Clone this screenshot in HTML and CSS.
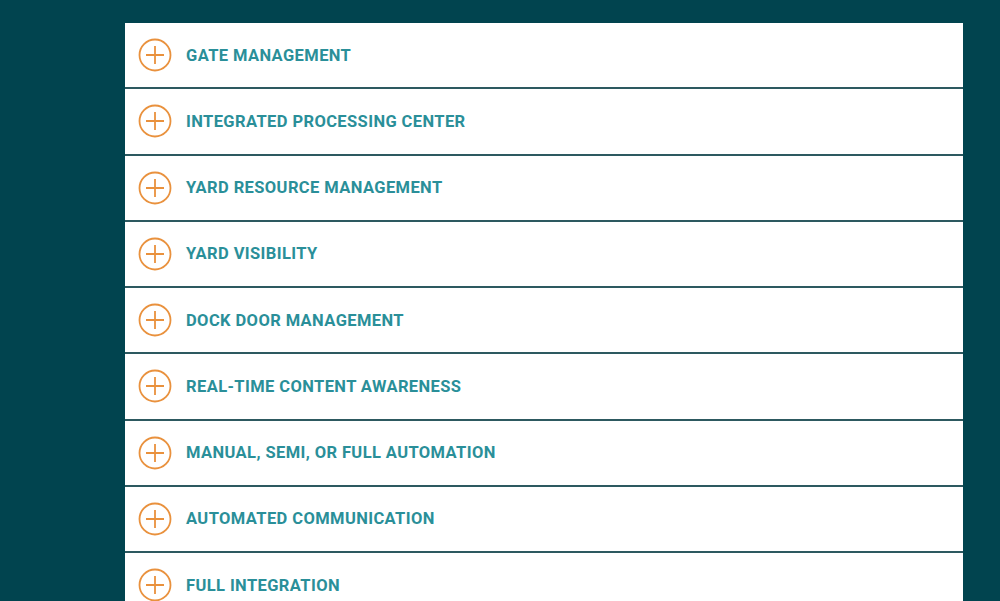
FILE: index.html
```html
<!DOCTYPE html>
<html lang="en">
<head>
	<meta charset="UTF-8">
	<meta name="viewport" content="width=device-width, initial-scale=1.0">
	<title>Features</title>
	<link rel="stylesheet" href="styles.css">
</head>
<body>
	<div class="accordion">
		<div class="acc-item"><span class="acc-icon"><svg viewBox="0 0 34 34"><circle cx="17" cy="17" r="15.5"/><path d="M8 17h18M17 8v18"/></svg></span><span class="acc-title">GATE MANAGEMENT</span></div>
		<div class="acc-item"><span class="acc-icon"><svg viewBox="0 0 34 34"><circle cx="17" cy="17" r="15.5"/><path d="M8 17h18M17 8v18"/></svg></span><span class="acc-title">INTEGRATED PROCESSING CENTER</span></div>
		<div class="acc-item"><span class="acc-icon"><svg viewBox="0 0 34 34"><circle cx="17" cy="17" r="15.5"/><path d="M8 17h18M17 8v18"/></svg></span><span class="acc-title">YARD RESOURCE MANAGEMENT</span></div>
		<div class="acc-item"><span class="acc-icon"><svg viewBox="0 0 34 34"><circle cx="17" cy="17" r="15.5"/><path d="M8 17h18M17 8v18"/></svg></span><span class="acc-title">YARD VISIBILITY</span></div>
		<div class="acc-item"><span class="acc-icon"><svg viewBox="0 0 34 34"><circle cx="17" cy="17" r="15.5"/><path d="M8 17h18M17 8v18"/></svg></span><span class="acc-title">DOCK DOOR MANAGEMENT</span></div>
		<div class="acc-item"><span class="acc-icon"><svg viewBox="0 0 34 34"><circle cx="17" cy="17" r="15.5"/><path d="M8 17h18M17 8v18"/></svg></span><span class="acc-title">REAL-TIME CONTENT AWARENESS</span></div>
		<div class="acc-item"><span class="acc-icon"><svg viewBox="0 0 34 34"><circle cx="17" cy="17" r="15.5"/><path d="M8 17h18M17 8v18"/></svg></span><span class="acc-title">MANUAL, SEMI, OR FULL AUTOMATION</span></div>
		<div class="acc-item"><span class="acc-icon"><svg viewBox="0 0 34 34"><circle cx="17" cy="17" r="15.5"/><path d="M8 17h18M17 8v18"/></svg></span><span class="acc-title">AUTOMATED COMMUNICATION</span></div>
		<div class="acc-item"><span class="acc-icon"><svg viewBox="0 0 34 34"><circle cx="17" cy="17" r="15.5"/><path d="M8 17h18M17 8v18"/></svg></span><span class="acc-title">FULL INTEGRATION</span></div>
	</div>
</body>
</html>
```

FILE: styles.css
```css
html, body {
	margin: 0;
	padding: 0;
	height: 100%;
	overflow: hidden;
}
body {
	background-color: #01444f;
	font-family: Roboto, "Liberation Sans", sans-serif;
}
.accordion {
	margin: 23px 0 0 125px;
	width: 838px;
	display: flex;
	flex-direction: column;
}
.acc-item {
	background-color: #ffffff;
	height: 64.25px;
	border-bottom: 2px solid #2d5960;
	display: flex;
	align-items: center;
	padding-left: 13px;
	cursor: pointer;
}
.acc-icon {
	width: 34px;
	height: 34px;
	display: flex;
}
.acc-icon svg {
	width: 34px;
	height: 34px;
	fill: none;
	stroke: #e9913d;
	stroke-width: 1.8;
}
.acc-title {
	margin-left: 14px;
	color: #2a8f99;
	font-size: 16.5px;
	font-weight: 700;
	letter-spacing: 0.4px;
}
```
